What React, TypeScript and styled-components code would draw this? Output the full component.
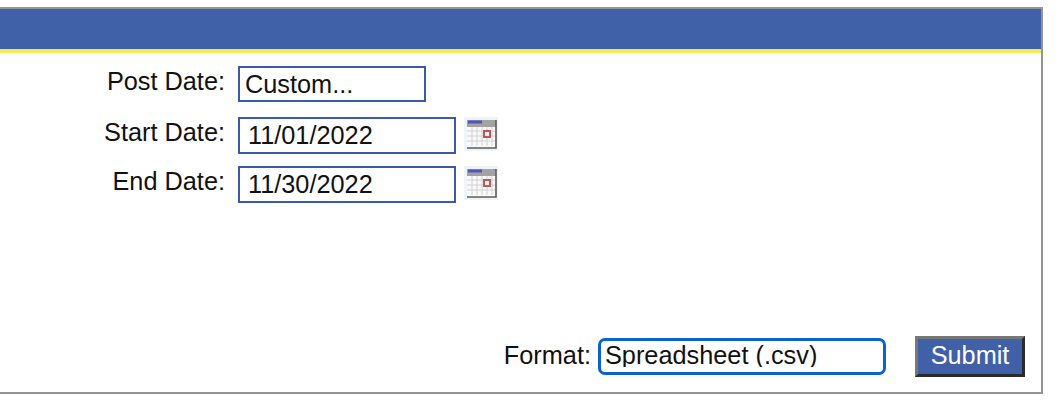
import React, { FC } from "react";
import styled, { createGlobalStyle } from "styled-components";

const GlobalStyle = createGlobalStyle`
  html, body {
    margin: 0;
    padding: 0;
    background: #ffffff;
    font-family: "Liberation Sans", Arial, sans-serif;
    color: #111111;
  }
`;

const Panel = styled.form`
  box-sizing: border-box;
  display: flex;
  flex-direction: column;
  width: 1043px;
  height: 387px;
  margin-top: 7px;
  border-top: 2px solid #949494;
  border-right: 2px solid #949494;
  border-bottom: 2px solid #949494;
`;

const HeaderBar = styled.div`
  height: 40px;
  flex: none;
  background: #4060a8;
  border-bottom: 4px solid #f7e858;
`;

const Fields = styled.div`
  display: grid;
  grid-template-columns: 225px auto;
  column-gap: 13px;
  justify-content: start;
  align-items: start;
  padding-top: 13px;
`;

const Label = styled.label`
  padding-top: 2px;
  font-size: 25.3px;
  line-height: 26px;
  text-align: right;
  white-space: nowrap;
`;

const FieldCell = styled.div<{ $bottom: number }>`
  display: flex;
  align-items: flex-start;
  gap: 8px;
  margin-bottom: ${(p) => p.$bottom}px;
`;

const PlainSelect = styled.select`
  box-sizing: border-box;
  appearance: none;
  width: 188px;
  height: 36px;
  padding: 0 0 0 5px;
  margin: 0;
  border: 2px solid #3a5aa8;
  border-radius: 0;
  background: #ffffff;
  color: #111111;
  font-family: inherit;
  font-size: 25.3px;
  outline: none;
`;

const DateInput = styled.input`
  box-sizing: border-box;
  width: 218px;
  height: 37px;
  padding: 0 0 0 8px;
  margin: 0;
  border: 2px solid #3a5aa8;
  border-radius: 0;
  background: #ffffff;
  color: #111111;
  font-family: inherit;
  font-size: 25.3px;
  outline: none;
`;

const CalendarButton = styled.button`
  display: block;
  width: 34px;
  height: 34px;
  padding: 0;
  border: 0;
  background: none;
`;

const Footer = styled.div`
  display: flex;
  justify-content: flex-end;
  align-items: center;
  gap: 29px;
  margin-top: auto;
  padding: 0 16px 15px 0;
`;

const FormatGroup = styled.div`
  display: flex;
  align-items: center;
  gap: 7px;
`;

const FormatLabel = styled.label`
  padding-bottom: 4px;
  font-size: 25.3px;
  line-height: 26px;
`;

const FormatSelect = styled.select`
  box-sizing: border-box;
  appearance: none;
  width: 288px;
  height: 37px;
  padding: 0 0 5px 4px;
  margin: 0;
  border: 3px solid #0a62d0;
  border-radius: 7px;
  background: #ffffff;
  color: #111111;
  font-family: inherit;
  font-size: 25.3px;
  outline: none;
`;

const SubmitButton = styled.button`
  box-sizing: border-box;
  width: 110px;
  height: 41px;
  padding: 0 0 3px;
  background: #4060a8;
  border-style: solid;
  border-width: 3px;
  border-color: #777777 #2b2b2b #2b2b2b #777777;
  color: #ffffff;
  font-family: inherit;
  font-size: 25.3px;
`;

const CalendarIcon: FC = () => (
  <svg width="34" height="34" viewBox="0 0 34 34" aria-hidden="true">
    <rect x="0" y="0" width="34" height="34" fill="#eef3fc" />
    <rect x="3" y="3" width="29" height="28" fill="#fbfafa" />
    <rect x="3" y="3" width="29" height="7" fill="#a3a3a3" />
    <rect x="4" y="3.5" width="14" height="3" fill="#4f55bb" />
    <path
      d="M8 10v19M13 10v19M18 10v19M23 10v19M28 10v19M3 14h29M3 19h29M3 24h29"
      stroke="#d2d0d0"
      strokeWidth="1"
      fill="none"
    />
    <rect x="20" y="14" width="6" height="6" fill="#f4f0f0" stroke="#bb5a5e" strokeWidth="2" />
    <path d="M3 31h29V3" stroke="#5d5d5d" strokeWidth="1.6" fill="none" />
  </svg>
);

interface DateRowProps {
  label: string;
  value: string;
  bottom: number;
}

const DateRow: FC<DateRowProps> = ({ label, value, bottom }) => (
  <>
    <Label>{label}</Label>
    <FieldCell $bottom={bottom}>
      <DateInput type="text" value={value} readOnly />
      <CalendarButton type="button" aria-label="Open calendar">
        <CalendarIcon />
      </CalendarButton>
    </FieldCell>
  </>
);

export default function App() {
  return (
    <>
      <GlobalStyle />
      <Panel>
        <HeaderBar />
        <Fields>
          <Label>Post Date:</Label>
          <FieldCell $bottom={15}>
            <PlainSelect defaultValue="custom">
              <option value="custom">Custom...</option>
            </PlainSelect>
          </FieldCell>
          <DateRow label="Start Date:" value="11/01/2022" bottom={12} />
          <DateRow label="End Date:" value="11/30/2022" bottom={0} />
        </Fields>
        <Footer>
          <FormatGroup>
            <FormatLabel>Format:</FormatLabel>
            <FormatSelect defaultValue="csv">
              <option value="csv">Spreadsheet (.csv)</option>
            </FormatSelect>
          </FormatGroup>
          <SubmitButton type="button">Submit</SubmitButton>
        </Footer>
      </Panel>
    </>
  );
}
